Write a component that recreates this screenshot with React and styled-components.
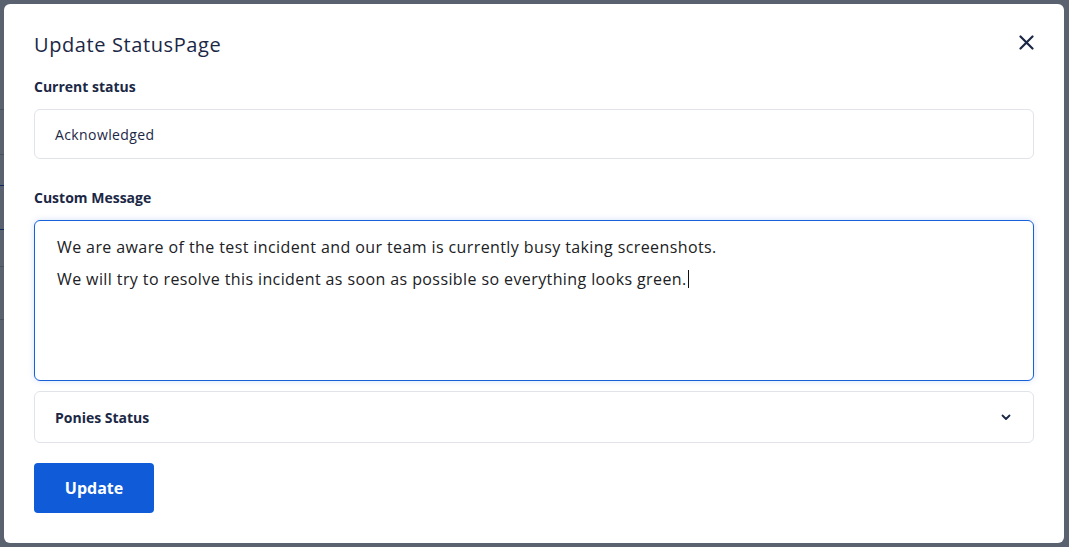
import React from 'react'
import styled, { createGlobalStyle } from 'styled-components'

const GlobalStyle = createGlobalStyle`
  html, body { margin: 0; padding: 0; height: 100%; }
  body {
    font-family: "Open Sans", Lato, "Liberation Sans", sans-serif;
    background: #ffffff;
    overflow: hidden;
  }
`

/* page behind the dialog, only its edges show */
const Page = styled.div`
  display: grid;
  grid-template-columns: 1fr 114px;
  height: 547px;
  overflow: hidden;
`

const PageMain = styled.div`
  display: flex;
  flex-direction: column;
  padding-top: 105px;
`

const PageLine = styled.div`
  height: ${p => p.h}px;
  border-bottom: 1px solid ${p => (p.blue ? '#1a56c4' : '#c9ced8')};
`

const Side = styled.aside`
  display: flex;
  flex-direction: column;
  gap: 14px;
`

const SideItem = styled.span`
  color: ${p => (p.blue ? '#1a56c4' : '#3a4457')};
  font-size: ${p => (p.big ? 12 : 15)}px;
  line-height: 20px;
  font-weight: ${p => (p.big ? 700 : 400)};
  white-space: nowrap;
`

const Overlay = styled.div`
  position: fixed;
  inset: 0;
  background: rgba(9, 20, 40, 0.67);
  padding: 4px 5px 4px 4px;
  display: flex;
`

const Dialog = styled.div`
  flex: 1;
  background: #ffffff;
  border-radius: 6px;
  padding: 29px 30px 0 30px;
  display: flex;
  flex-direction: column;
`

const Header = styled.div`
  display: flex;
  align-items: center;
  justify-content: space-between;
  height: 24px;
`

const Title = styled.h2`
  margin: 0;
  font-size: 20px;
  line-height: 24px;
  font-weight: 400;
  letter-spacing: 0.6px;
  color: #1b2845;
`

const Close = styled.button`
  border: 0;
  background: none;
  padding: 0;
  width: 20px;
  height: 20px;
  margin-right: -2px;
  margin-top: -6px;
  display: flex;
  align-items: center;
  justify-content: center;
  cursor: pointer;
`

const Label = styled.div`
  margin-top: ${p => p.top}px;
  font-size: 14px;
  line-height: 20px;
  font-weight: 700;
  color: #1b2845;
`

const Field = styled.div`
  margin-top: 12px;
  height: 50px;
  box-sizing: border-box;
  border: 1px solid #e1e3ea;
  border-radius: 6px;
  padding: 0 20px;
  display: flex;
  align-items: center;
  font-size: 14px;
  letter-spacing: 0.4px;
  color: #1b2845;
`

const Message = styled.div`
  margin-top: 12px;
  height: 161px;
  box-sizing: border-box;
  border: 1px solid #1760d8;
  border-radius: 6px;
  box-shadow: 0 0 6px rgba(23, 96, 216, 0.18);
  padding: 14px 22px;
  font-size: 16px;
  letter-spacing: 0.4px;
  color: #202124;
`

const Para = styled.p`
  margin: 0 0 8px;
  line-height: 24px;
`

const Caret = styled.span`
  display: inline-block;
  width: 1px;
  height: 18px;
  background: #111;
  vertical-align: -3px;
  margin-left: 1px;
`

const Select = styled(Field)`
  margin-top: 10px;
  height: 52px;
  justify-content: space-between;
  font-weight: 700;
  letter-spacing: 0;
  padding-right: 22px;
`

const Submit = styled.button`
  margin-top: 20px;
  align-self: flex-start;
  width: 120px;
  height: 50px;
  border: 0;
  border-radius: 4px;
  background: #0f5bd8;
  color: #ffffff;
  font-family: inherit;
  font-size: 16px;
  font-weight: 700;
  cursor: pointer;
`

export default function App() {
  return (
    <>
      <GlobalStyle />
      <Page>
        <PageMain>
          <PageLine h={4} />
          <PageLine h={44} />
          <PageLine h={30} blue />
          <PageLine h={43} blue />
          <PageLine h={36} />
          <PageLine h={52} />
        </PageMain>
        <Side>
          <SideItem big>Incident Timeline</SideItem>
          <SideItem blue>Priority</SideItem>
          <SideItem>Acc</SideItem>
          <SideItem>Add</SideItem>
          <SideItem blue>Priority</SideItem>
          <SideItem>Trig</SideItem>
          <SideItem>Rac</SideItem>
        </Side>
      </Page>
      <Overlay>
        <Dialog>
          <Header>
            <Title>Update StatusPage</Title>
            <Close aria-label="Close">
              <svg width="15" height="15" viewBox="0 0 15 15">
                <path d="M1.5 1.5 L13.5 13.5 M13.5 1.5 L1.5 13.5" stroke="#1b2845" strokeWidth="2.2" strokeLinecap="round" />
              </svg>
            </Close>
          </Header>
          <Label top={20}>Current status</Label>
          <Field>Acknowledged</Field>
          <Label top={29}>Custom Message</Label>
          <Message>
            <Para>We are aware of the test incident and our team is currently busy taking screenshots.</Para>
            <Para>
              We will try to resolve this incident as soon as possible so everything looks green.<Caret />
            </Para>
          </Message>
          <Select>
            Ponies Status
            <svg width="10" height="7" viewBox="0 0 10 7">
              <path d="M1.5 1.5 L5 5 L8.5 1.5" fill="none" stroke="#1b2845" strokeWidth="1.8" strokeLinecap="round" strokeLinejoin="round" />
            </svg>
          </Select>
          <Submit>Update</Submit>
        </Dialog>
      </Overlay>
    </>
  )
}
